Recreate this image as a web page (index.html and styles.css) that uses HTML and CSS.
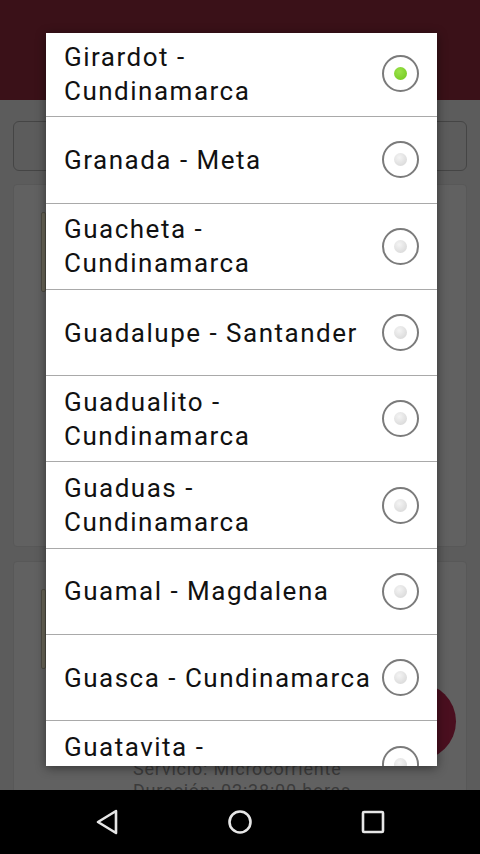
FILE: index.html
```html
<!DOCTYPE html>
<html lang="es">

<head>
    <meta charset="UTF-8">
    <meta name="viewport" content="width=device-width, initial-scale=1.0">
    <title>Ciudades</title>
    <link rel="stylesheet" href="styles.css">
</head>

<body>
    <div class="screen">
        <!-- App bar (dimmed) -->
        <header class="topbar"></header>

        <!-- Page content behind the dialog -->
        <main class="content">
            <div class="search-box"></div>
            <div class="card card-tall">
                <div class="accent"></div>
            </div>
            <div class="card card-last">
                <div class="accent"></div>
                <p class="card-line">Servicio: Microcorriente</p>
                <p class="card-line">Duración: 02:38:00 horas</p>
            </div>
            <div class="fab"></div>
        </main>

        <!-- Android nav bar -->
        <nav class="navbar">
            <svg width="30" height="30" viewBox="0 0 30 30">
                <path d="M24 4 L6 15 L24 26 Z" fill="none" stroke="#e6e6e6" stroke-width="2.6" stroke-linejoin="round" />
            </svg>
            <svg width="30" height="30" viewBox="0 0 30 30">
                <circle cx="15" cy="15" r="10.5" fill="none" stroke="#e6e6e6" stroke-width="2.6" />
            </svg>
            <svg width="30" height="30" viewBox="0 0 30 30">
                <rect x="5" y="5" width="20" height="20" rx="1" fill="none" stroke="#e6e6e6" stroke-width="2.6" />
            </svg>
        </nav>

        <!-- Single choice dialog -->
        <div class="dialog">
            <ul class="choice-list">
                <li class="choice">
                    <span class="choice-label">Girardot - Cundinamarca</span>
                    <span class="radio checked"></span>
                </li>
                <li class="choice">
                    <span class="choice-label">Granada - Meta</span>
                    <span class="radio"></span>
                </li>
                <li class="choice">
                    <span class="choice-label">Guacheta - Cundinamarca</span>
                    <span class="radio"></span>
                </li>
                <li class="choice">
                    <span class="choice-label">Guadalupe - Santander</span>
                    <span class="radio"></span>
                </li>
                <li class="choice">
                    <span class="choice-label">Guadualito - Cundinamarca</span>
                    <span class="radio"></span>
                </li>
                <li class="choice">
                    <span class="choice-label">Guaduas - Cundinamarca</span>
                    <span class="radio"></span>
                </li>
                <li class="choice">
                    <span class="choice-label">Guamal - Magdalena</span>
                    <span class="radio"></span>
                </li>
                <li class="choice">
                    <span class="choice-label">Guasca - Cundinamarca</span>
                    <span class="radio"></span>
                </li>
                <li class="choice">
                    <span class="choice-label">Guatavita - Cundinamarca</span>
                    <span class="radio"></span>
                </li>
            </ul>
        </div>
    </div>
</body>

</html>
```

FILE: styles.css
```css
/* Reset */
* {
    margin: 0;
    padding: 0;
    box-sizing: border-box;
}

body {
    font-family: Roboto, "Noto Sans", sans-serif;
    background-color: #000;
}

.screen {
    position: relative;
    width: 480px;
    height: 854px;
    overflow: hidden;
    display: flex;
    flex-direction: column;
}

/* Dimmed background screen */
.topbar {
    height: 100px;
    background-color: #3a1118;
}

.content {
    position: relative;
    flex: 1;
    background-color: #5c5c5c;
    padding: 21px 13px 0;
    overflow: hidden;
}

.search-box {
    height: 50px;
    border: 1px solid #454545;
    border-radius: 6px;
    margin-bottom: 13px;
}

.card {
    background-color: #616161;
    border: 1px solid #585858;
    border-radius: 4px;
    padding-left: 27px;
}

.card-tall {
    height: 363px;
    margin-bottom: 14px;
    padding-top: 27px;
}

.card-last {
    height: 260px;
    padding-top: 27px;
}

.accent {
    width: 5px;
    height: 80px;
    background-color: #6a6658;
    border: 1px solid #4e4c44;
    border-radius: 2px;
}

.card-line {
    margin-left: 92px;
    font-size: 18px;
    line-height: 22px;
    letter-spacing: 0.8px;
    color: #3b3b3b;
}

.card-last .accent {
    margin-bottom: 89px;
}

.fab {
    position: absolute;
    left: 379px;
    top: 583px;
    width: 77px;
    height: 77px;
    border-radius: 50%;
    background-color: #4a0f1f;
}

/* Navigation bar */
.navbar {
    height: 64px;
    background-color: #000;
    display: flex;
    justify-content: space-between;
    align-items: center;
    padding: 0 92px 0 92px;
}

/* Dialog */
.dialog {
    position: absolute;
    left: 46px;
    top: 33px;
    width: 391px;
    height: 733px;
    background-color: #fff;
    overflow: hidden;
    box-shadow: 0 2px 10px rgba(0, 0, 0, 0.45);
}

.choice-list {
    list-style: none;
    margin-top: -2px;
}

.choice {
    height: 86.3px;
    display: flex;
    align-items: center;
    padding: 0 18px 0 18px;
    border-bottom: 1px solid #a9a9a9;
}

.choice-label {
    flex: 1;
    font-size: 26px;
    line-height: 34px;
    letter-spacing: 1.5px;
    color: #111;
}

.radio {
    position: relative;
    width: 37px;
    height: 37px;
    margin-left: 7px;
    border: 2px solid #7b7b7b;
    border-radius: 50%;
    flex-shrink: 0;
}

.radio::after {
    content: "";
    position: absolute;
    left: 50%;
    top: 50%;
    width: 13px;
    height: 13px;
    margin: -6.5px 0 0 -6.5px;
    border-radius: 50%;
    background: radial-gradient(circle at 40% 35%, #f4f4f4, #d3d3d3);
}

.radio.checked::after {
    background: radial-gradient(circle at 40% 35%, #9be34a, #6fc51c);
}
```
